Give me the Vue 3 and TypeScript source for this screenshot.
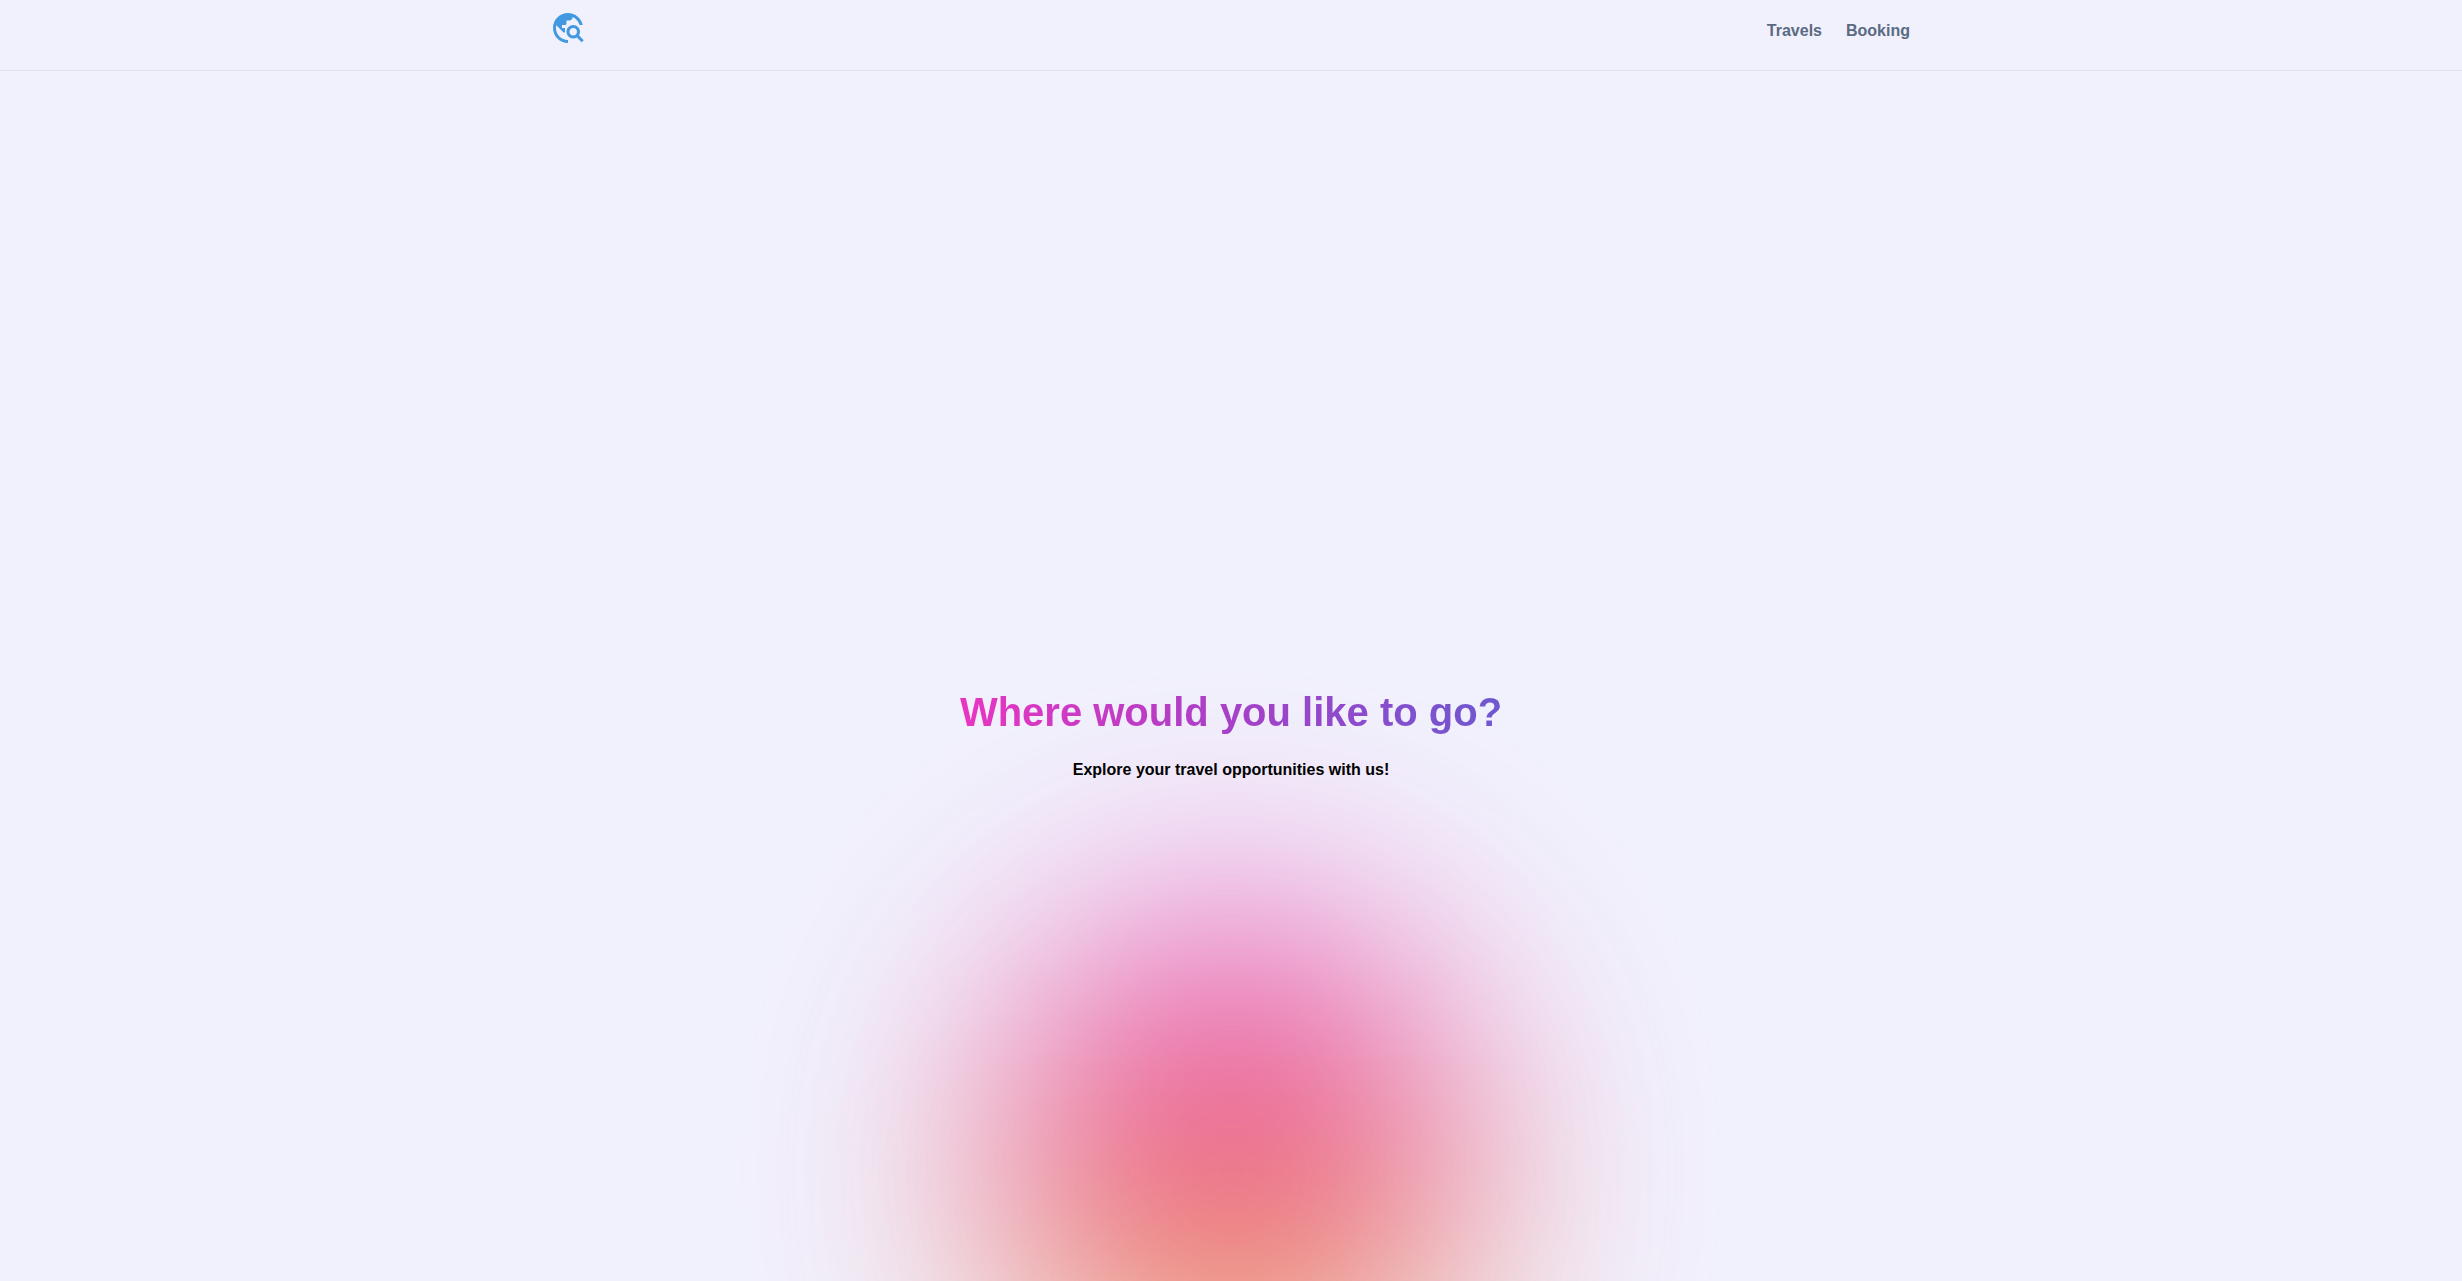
<script setup lang="ts">
interface NavItem {
  label: string
  href: string
}

const navItems: NavItem[] = [
  { label: 'Travels', href: '#travels' },
  { label: 'Booking', href: '#booking' },
]
</script>

<template>
  <div class="page">
    <header class="header">
      <div class="header-inner">
        <a class="logo" href="#" aria-label="Home">
          <svg viewBox="0 0 24 24" aria-hidden="true">
            <path
              d="M19.3 16.9c.4-.7.7-1.5.7-2.4 0-2.5-2-4.5-4.5-4.5S11 12 11 14.5s2 4.5 4.5 4.5c.9 0 1.7-.3 2.4-.7l3.2 3.2 1.4-1.4-3.2-3.2zm-3.8.1c-1.4 0-2.5-1.1-2.5-2.5s1.1-2.5 2.5-2.5 2.5 1.1 2.5 2.5-1.1 2.5-2.5 2.5zM12 20v2C6.48 22 2 17.52 2 12S6.48 2 12 2c4.84 0 8.87 3.44 9.8 8h-2.07c-.64-2.46-2.4-4.47-4.73-5.41V5c0 1.1-.9 2-2 2h-2v2c0 .55-.45 1-1 1H8v2h2v3H9l-4.79-4.79C4.08 10.79 4 11.38 4 12c0 4.41 3.59 8 8 8z"
            />
          </svg>
        </a>
        <nav class="nav" aria-label="Main">
          <a v-for="item in navItems" :key="item.label" :href="item.href">{{ item.label }}</a>
        </nav>
      </div>
    </header>

    <main class="hero">
      <div class="glow" aria-hidden="true"></div>
      <h1>Where would you like to go?</h1>
      <p>Explore your travel opportunities with us!</p>
    </main>
  </div>
</template>

<style>
body {
  background: #f1f1fd;
}
</style>

<style scoped>
.page {
  display: flex;
  flex-direction: column;
  min-height: 100vh;
  font-family: "Liberation Sans", Arial, Helvetica, sans-serif;
  font-weight: 700;
}

.header {
  border-bottom: 1px solid #e1e1ea;
}

.header-inner {
  display: flex;
  justify-content: space-between;
  box-sizing: border-box;
  max-width: 1362px;
  height: 70px;
  margin: 0 auto;
  padding-top: 10px;
}

.logo {
  height: 36px;
}

.logo svg {
  display: block;
  width: 36px;
  height: 36px;
  fill: #4299e1;
}

.nav {
  display: flex;
  gap: 24px;
  padding: 9px 2px 0 0;
}

.nav a {
  color: #5a6a82;
  font-size: 16px;
  line-height: 24px;
  text-decoration: none;
}

.hero {
  position: relative;
  display: flex;
  flex: 1;
  flex-direction: column;
  align-items: center;
  justify-content: center;
  gap: 22px;
  padding-top: 118px;
  overflow: hidden;
  text-align: center;
}

.hero h1 {
  position: relative;
  margin: 0;
  background: linear-gradient(to right, #e935c1, #a640c8 50%, #6e58d0);
  background-clip: text;
  color: transparent;
  font-size: 40px;
  line-height: 48px;
}

.hero p {
  position: relative;
  margin: 0;
  color: #000;
  font-size: 16px;
  line-height: 24px;
}

/* Sunset disc that rises from below the fold behind the headline. */
.glow {
  position: absolute;
  bottom: -140px;
  left: 50%;
  width: 480px;
  height: 500px;
  margin-left: -240px;
  border-radius: 50%;
  background: linear-gradient(#e600b4, #ea3246 50%, #f0a01e);
  filter: blur(120px);
  opacity: 0.72;
}
</style>
